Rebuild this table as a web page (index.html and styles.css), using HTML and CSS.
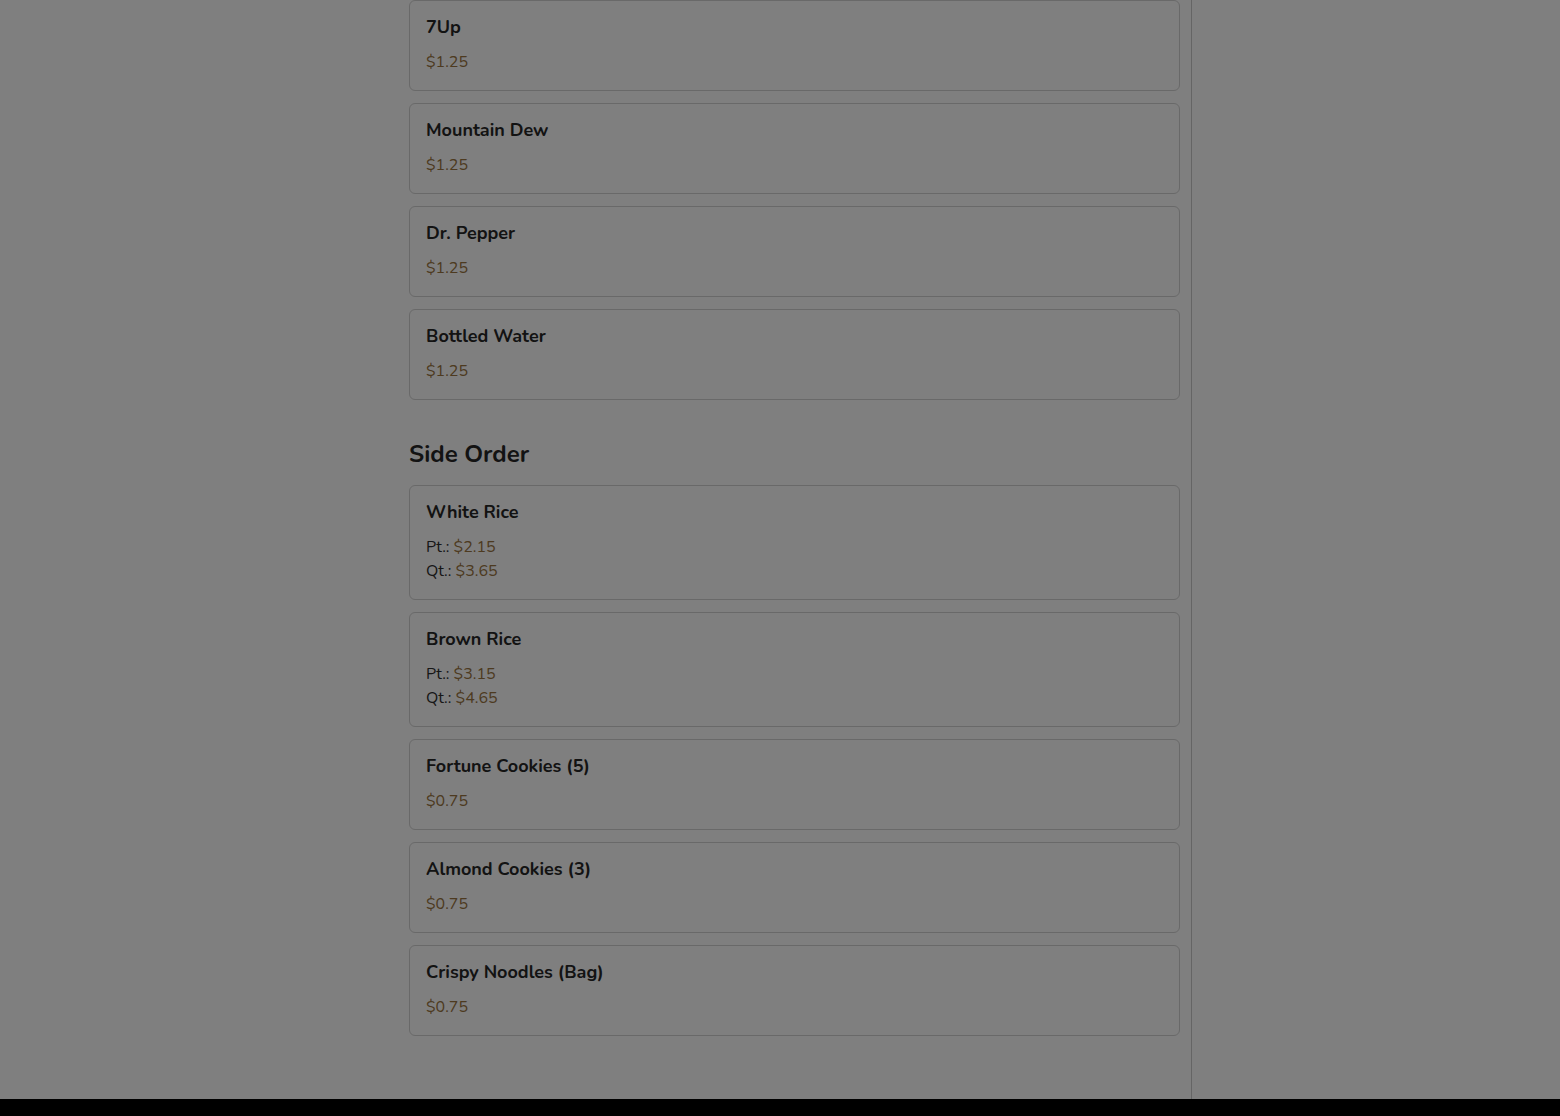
FILE: index.html
```html
<!DOCTYPE html>
<html lang="en">
<head>
<meta charset="utf-8">
<title>Menu</title>
<link rel="stylesheet" href="styles.css">
</head>
<body>
<div class="shell">
  <aside class="sidebar"></aside>
  <main class="menu">
    <section class="category">
      <div class="items">
        <article class="item"><h3 class="item-name">7Up</h3><p class="price">$1.25</p></article>
        <article class="item"><h3 class="item-name">Mountain Dew</h3><p class="price">$1.25</p></article>
        <article class="item"><h3 class="item-name">Dr. Pepper</h3><p class="price">$1.25</p></article>
        <article class="item"><h3 class="item-name">Bottled Water</h3><p class="price">$1.25</p></article>
      </div>
    </section>
    <section class="category">
      <h2 class="category-title">Side Order</h2>
      <div class="items">
        <article class="item"><h3 class="item-name">White Rice</h3>
          <p class="size">Pt.: <span class="price-inline">$2.15</span></p>
          <p class="size">Qt.: <span class="price-inline">$3.65</span></p></article>
        <article class="item"><h3 class="item-name">Brown Rice</h3>
          <p class="size">Pt.: <span class="price-inline">$3.15</span></p>
          <p class="size">Qt.: <span class="price-inline">$4.65</span></p></article>
        <article class="item"><h3 class="item-name">Fortune Cookies (5)</h3><p class="price">$0.75</p></article>
        <article class="item"><h3 class="item-name">Almond Cookies (3)</h3><p class="price">$0.75</p></article>
        <article class="item"><h3 class="item-name">Crispy Noodles (Bag)</h3><p class="price">$0.75</p></article>
      </div>
    </section>
  </main>
  <div class="rest"></div>
</div>
<footer class="footer"></footer>
<div class="backdrop"></div>
</body>
</html>
```
FILE: styles.css
```css
* { box-sizing: border-box; }
html, body { margin: 0; padding: 0; }
body {
  background: #ffffff;
  color: #2a2a2a;
  font-family: "Nunito", "Lato", "Open Sans", sans-serif;
  font-size: 16px;
}
.shell {
  display: flex;
  min-height: 1098px;
}
.sidebar { width: 409px; flex: none; }
.menu {
  width: 783px;
  flex: none;
  padding: 0 11px 63px 0;
  border-right: 1px solid #cacaca;
  box-shadow: inset -6px 0 0 #ffffff;
}
.rest { flex: 1; }
.category + .category { margin-top: 40px; }
.category-title {
  margin: 0 0 16px;
  font-size: 24px;
  line-height: 29px;
  font-weight: 700;
  color: #262626;
}
.items {
  display: flex;
  flex-direction: column;
  gap: 12px;
}
.item {
  width: 771px;
  border: 1px solid #d2d2d2;
  border-radius: 6px;
  padding: 16px;
  background: #fefefe;
}
.item-name {
  margin: 0 0 12px;
  font-size: 18px;
  line-height: 21px;
  font-weight: 700;
  color: #262626;
}
.price, .size {
  margin: 0;
  font-size: 16px;
  line-height: 24px;
}
.price, .price-inline { color: #9a7440; }
.size { color: #2e2e2e; }
.footer { height: 18px; background: #000; }
.backdrop {
  position: fixed;
  inset: 0;
  background: rgba(0, 0, 0, 0.5);
}
```
